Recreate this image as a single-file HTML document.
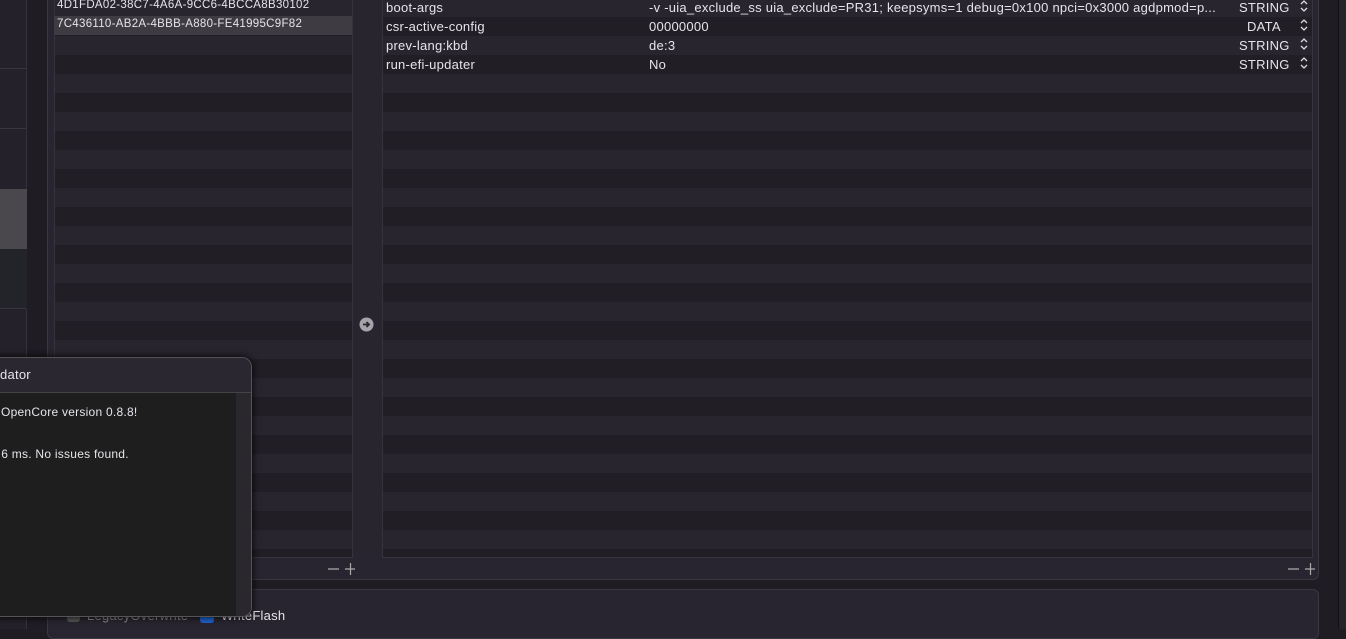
<!DOCTYPE html><html><head><style>
*{margin:0;padding:0;box-sizing:border-box}
body{width:1346px;height:629px;overflow:hidden;background:#1f1c24;position:relative;font-family:"Liberation Sans",Helvetica,sans-serif;color:#e6e4ea}
.a{position:absolute}
.rows{background:repeating-linear-gradient(to bottom,#29252f 0 19px,#211e26 19px 38px)}
.t{position:absolute;font-size:13px;white-space:nowrap;letter-spacing:.25px}
.s{font-size:11.5px;letter-spacing:.3px}
</style></head><body>
<div class="a" style="left:0;top:0;width:27px;height:629px;background:#24212a;border-right:1px solid #35323a"></div>
<div class="a" style="left:0;top:68px;width:26px;height:1px;background:#38353d"></div>
<div class="a" style="left:0;top:128px;width:26px;height:1px;background:#38353d"></div>
<div class="a" style="left:0;top:189px;width:27px;height:60px;background:#4a474d"></div>
<div class="a" style="left:0;top:249px;width:27px;height:60px;background:#22242a"></div>
<div class="a" style="left:0;top:308px;width:26px;height:1px;background:#38353d"></div>
<div class="a" style="left:47px;top:-10px;width:1272px;height:590px;background:#292530;border:1px solid #3a3740;border-radius:6px"></div>
<div class="a rows" style="left:54px;top:-3px;width:299px;height:561px;border:1px solid #36333b"></div>
<div class="a" style="left:54px;top:16px;width:298px;height:19px;background:#3e3c42"></div>
<div class="t s" style="left:57px;top:-1px">4D1FDA02-38C7-4A6A-9CC6-4BCCA8B30102</div>
<div class="t s" style="left:57px;top:18px">7C436110-AB2A-4BBB-A880-FE41995C9F82</div>
<div class="a rows" style="left:382px;top:-3px;width:931px;height:561px;border:1px solid #36333b"></div>
<div class="t" style="left:386px;top:0px">boot-args</div>
<div class="t" style="left:386px;top:19px">csr-active-config</div>
<div class="t" style="left:386px;top:38px">prev-lang:kbd</div>
<div class="t" style="left:386px;top:57px">run-efi-updater</div>
<div class="t" style="left:649px;top:0px">-v -uia_exclude_ss uia_exclude=PR31; keepsyms=1 debug=0x100 npci=0x3000 agdpmod=p...</div>
<div class="t" style="left:649px;top:19px">00000000</div>
<div class="t" style="left:649px;top:38px">de:3</div>
<div class="t" style="left:649px;top:57px">No</div>
<div class="t" style="left:1239px;top:0px">STRING</div>
<div class="t" style="left:1247px;top:19px">DATA</div>
<div class="t" style="left:1239px;top:38px">STRING</div>
<div class="t" style="left:1239px;top:57px">STRING</div>
<svg class="a" style="left:1299px;top:0" width="10" height="72"><g stroke="#ddd" stroke-width="1.3" fill="none"><path d="M2 4l3-3 3 3M2 8l3 3 3-3"/><path d="M2 23l3-3 3 3M2 27l3 3 3-3"/><path d="M2 42l3-3 3 3M2 46l3 3 3-3"/><path d="M2 61l3-3 3 3M2 65l3 3 3-3"/></g></svg>
<svg class="a" style="left:359px;top:317px" width="15" height="15"><circle cx="7.5" cy="7.5" r="7" fill="#a6a4aa"/><path d="M4 7.5h6M7.5 5l2.5 2.5-2.5 2.5" stroke="#29262e" stroke-width="1.8" fill="none"/></svg>
<svg class="a" style="left:327px;top:562px" width="28" height="14"><path d="M1 7h11M18 7h11M23.5 1v12" stroke="#aaa" stroke-width="1.2"/></svg>
<svg class="a" style="left:1287px;top:562px" width="28" height="14"><path d="M1 7h11M18 7h11M23.5 1v12" stroke="#aaa" stroke-width="1.2"/></svg>
<div class="a" style="left:47px;top:589px;width:1272px;height:50px;background:#292530;border:1px solid #3a3740;border-radius:6px"></div>
<div class="a" style="left:67px;top:609px;width:13px;height:13px;background:#555;border-radius:3px"></div>
<div class="t" style="left:87px;top:608px;color:#888">LegacyOverwrite</div>
<div class="a" style="left:200px;top:609px;width:14px;height:14px;background:#1f63d0;border-radius:3px"></div>
<div class="t" style="left:221px;top:608px">WriteFlash</div>
<div class="a" style="left:1338px;top:0;width:8px;height:629px;background:#26242a;border-left:1px solid #111"></div>
<div class="a" style="left:-10px;top:357px;width:262px;height:260px;background:#1e1e1e;border:1px solid #555;border-radius:10px;overflow:hidden;box-shadow:0 0 8px #000">
 <div style="height:35px;background:#2a2730;border-bottom:1px solid #444"></div>
 <div class="a" style="left:245px;top:35px;width:16px;height:225px;background:#2a282d"></div>
</div>
<div class="t" style="left:0;top:367px">dator</div>
<div class="t" style="left:1px;top:405px;font-size:12px">OpenCore version 0.8.8!</div>
<div class="t" style="left:0;top:447px;font-size:12px">&#8202;6 ms. No issues found.</div>
</body></html>
